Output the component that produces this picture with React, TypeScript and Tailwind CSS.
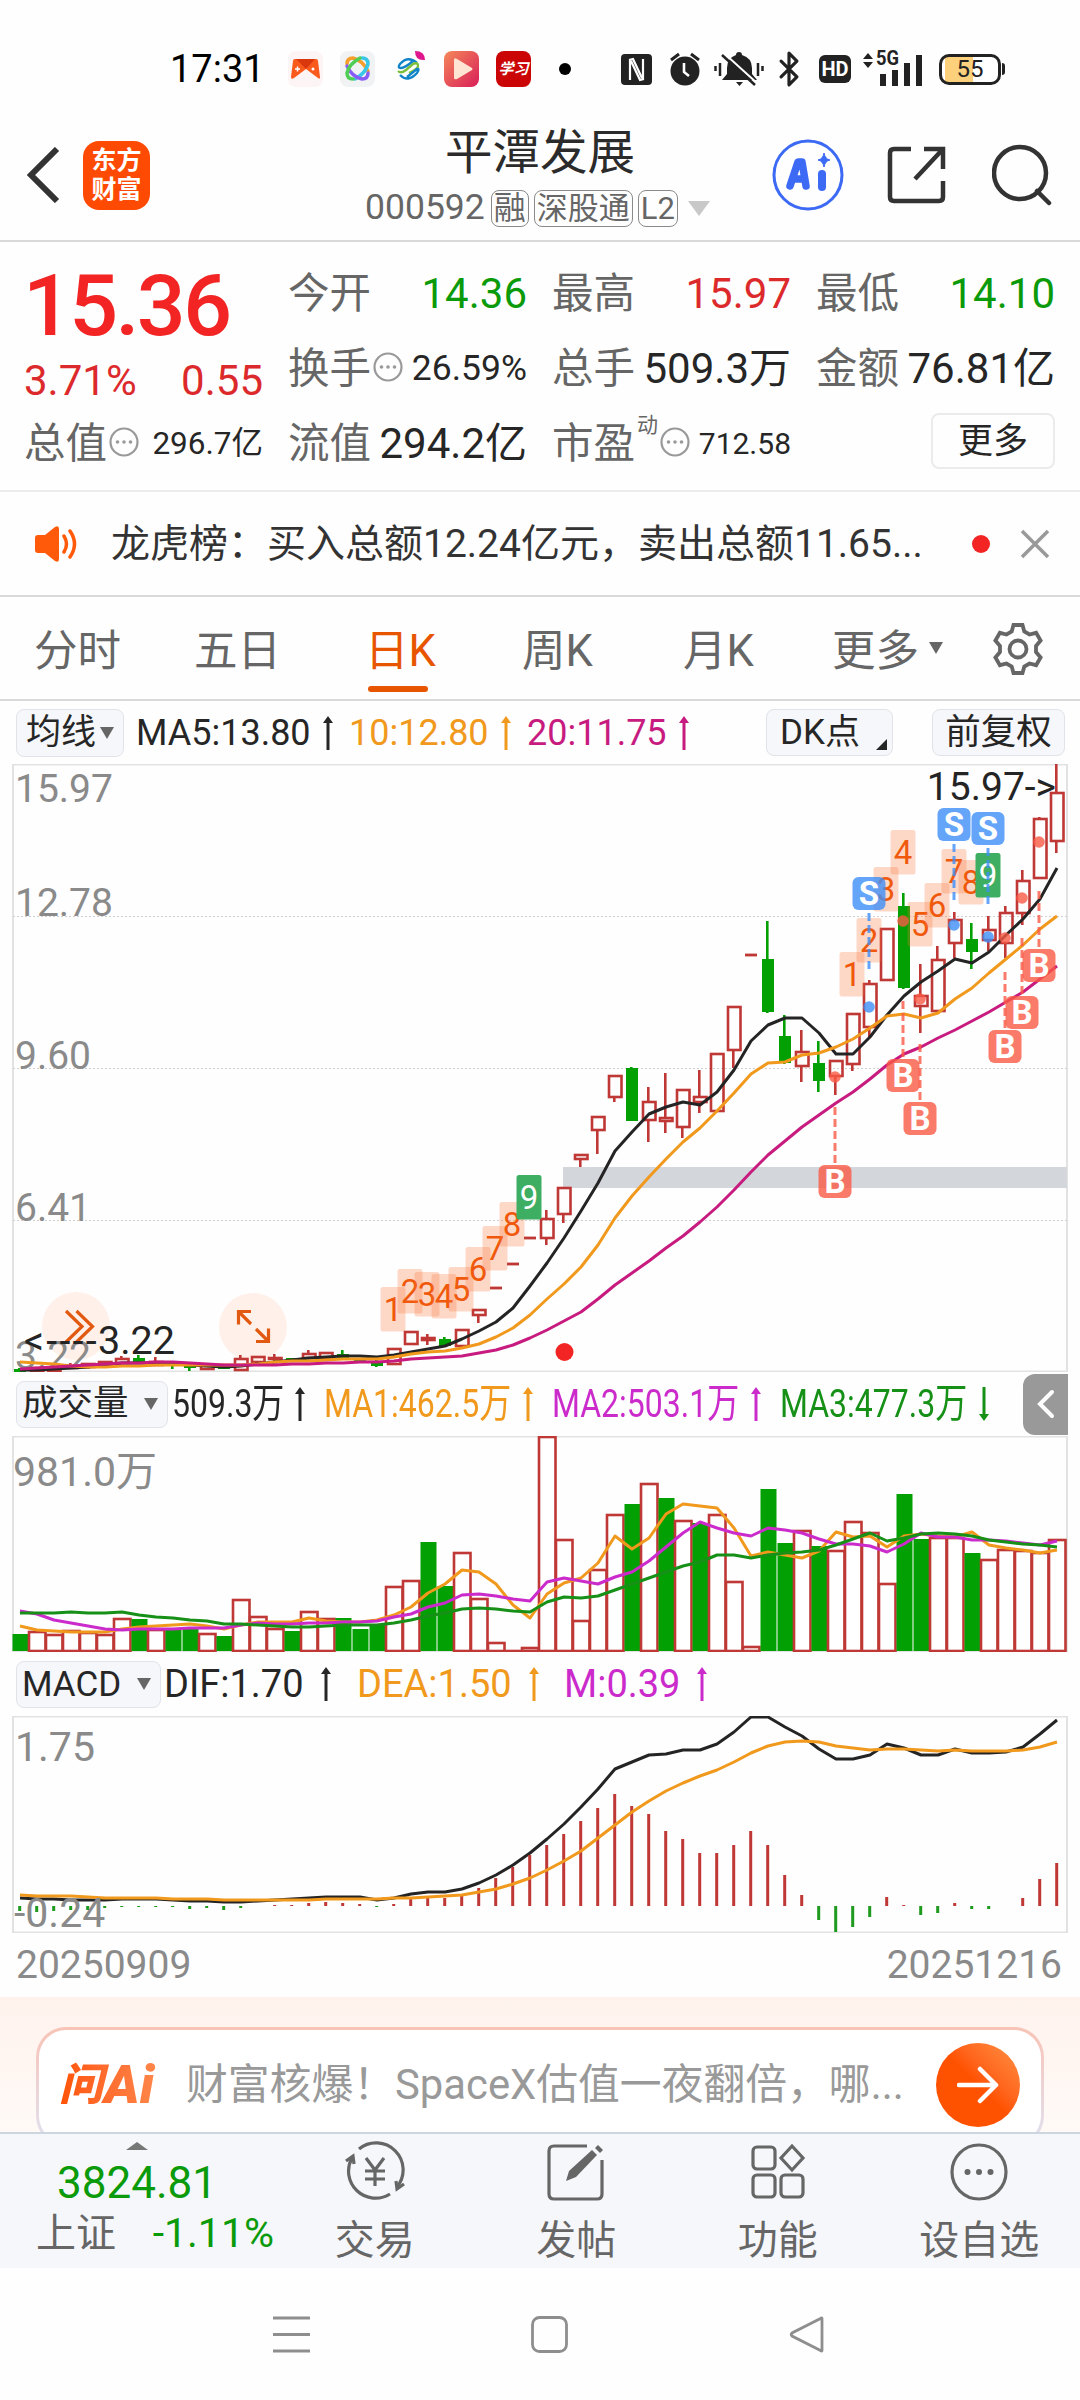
import React from 'react';
import { Bluetooth } from 'lucide-react';

const RED = '#bf3836';
const GREEN = '#02a002';
const INK = '#242424';
const ORANGE = '#f0991c';
const MAGENTA = '#c71b7f';
const PURPLE = '#cb2bcb';

// x of the n-th trading day, shared by all three charts
const px = (i: number) => 20 + i * 17;

type Candle = [string, number, number, number?, number?];

// [colour, body top, body bottom, high, low]
const candles: Candle[] = [
  ['g', 1369, 1372, 1368, 1373], ['r', 1368, 1372], ['r', 1369, 1371], ['r', 1366, 1368, 1363, 1369],
  ['r', 1364, 1367], ['r', 1362, 1366], ['r', 1359, 1363, 1356, 1363], ['g', 1358, 1362, 1355, 1362],
  ['r', 1362, 1365, 1357, 1366], ['g', 1364, 1366, 1363, 1369], ['g', 1365, 1368, 1364, 1371], ['r', 1365, 1369],
  ['g', 1366, 1369], ['r', 1359, 1370, 1355, 1370], ['r', 1357, 1362], ['r', 1358, 1359, 1354, 1361],
  ['g', 1358, 1361], ['r', 1354, 1358, 1350, 1359], ['r', 1353, 1358], ['g', 1354, 1358, 1350, 1358],
  ['g', 1358, 1361], ['g', 1361, 1366, 1360, 1367], ['r', 1349, 1364], ['r', 1332, 1344],
  ['r', 1338, 1340, 1334, 1345], ['g', 1339, 1346, 1337, 1347], ['r', 1330, 1346], ['r', 1310, 1315, 1309, 1323],
  ['d', 1288, 1288], ['d', 1264, 1264], ['d', 1238, 1238], ['r', 1219, 1238, 1210, 1245],
  ['r', 1188, 1214, 1188, 1223], ['r', 1155, 1159, 1155, 1167], ['r', 1117, 1130, 1117, 1154], ['r', 1076, 1097, 1076, 1102],
  ['g', 1068, 1121, 1067, 1121], ['r', 1102, 1120, 1087, 1142], ['r', 1118, 1121, 1073, 1133], ['r', 1090, 1127, 1090, 1138],
  ['r', 1097, 1102, 1070, 1113], ['r', 1054, 1111], ['r', 1007, 1050, 1007, 1068], ['d', 955, 955],
  ['g', 959, 1012, 921, 1013], ['g', 1036, 1063, 1015, 1064], ['r', 1052, 1066, 1030, 1082], ['g', 1063, 1081, 1041, 1092],
  ['r', 1061, 1076, 1061, 1095], ['r', 1014, 1064, 1014, 1071], ['r', 984, 1027, 980, 1037], ['r', 929, 980],
  ['g', 906, 988, 893, 989], ['r', 996, 1006, 964, 1033], ['r', 960, 1011, 946, 1011], ['r', 920, 943, 912, 958],
  ['g', 939, 952, 923, 969], ['r', 930, 940, 916, 951], ['r', 913, 943, 906, 958], ['r', 881, 913, 870, 925],
  ['r', 819, 878, 817, 878], ['r', 793, 841, 764, 853],
];

const ma5 = [
  1370, 1370, 1369, 1368, 1367, 1365, 1363, 1363, 1363, 1364, 1365, 1366, 1367, 1366, 1364, 1362, 1360, 1358, 1357, 1356, 1356,
  1357, 1355, 1352, 1349, 1346, 1339, 1331, 1322, 1308, 1286, 1263, 1238, 1211, 1183, 1151, 1132, 1114, 1107, 1102, 1105,
  1092, 1070, 1041, 1025, 1018, 1018, 1033, 1054, 1054, 1037, 1015, 996, 982, 971, 959, 963, 952, 935, 919, 899, 868,
];
const ma10 = [
  1362, 1363, 1364, 1366, 1367, 1367, 1366, 1366, 1365, 1365, 1365, 1365, 1365, 1365, 1364, 1362, 1361, 1361, 1360, 1359, 1359,
  1359, 1357, 1354, 1352, 1351, 1348, 1344, 1337, 1328, 1315, 1299, 1284, 1267, 1245, 1218, 1196, 1177, 1159, 1142, 1128,
  1111, 1093, 1074, 1063, 1062, 1055, 1053, 1047, 1039, 1028, 1016, 1014, 1018, 1013, 999, 988, 973, 959, 945, 929, 916,
];
const ma20 = [
  1369, 1368, 1367, 1366, 1365, 1364, 1363, 1363, 1362, 1362, 1363, 1364, 1365, 1365, 1365, 1365, 1364, 1364, 1363, 1363, 1362,
  1362, 1361, 1359, 1358, 1357, 1356, 1353, 1350, 1345, 1338, 1330, 1321, 1312, 1299, 1285, 1273, 1261, 1248, 1236, 1222,
  1207, 1190, 1172, 1155, 1141, 1127, 1115, 1103, 1092, 1079, 1065, 1054, 1047, 1038, 1030, 1021, 1012, 1002, 992, 979, 966,
];

// [day, label, top]
const counts: [number, string, number][] = [
  [22, '1', 1287], [23, '2', 1269], [24, '3', 1272], [25, '4', 1274], [26, '5', 1267], [27, '6', 1247], [28, '7', 1226],
  [29, '8', 1202], [30, '9', 1175], [49, '1', 952], [50, '2', 918], [51, '3', 867], [52, '4', 830], [53, '5', 902],
  [54, '6', 883], [55, '7', 849], [56, '8', 860], [57, '9', 853],
];

// [day, kind, badge top, dot y]
const signals: [number, 'B' | 'S', number, number][] = [
  [50, 'S', 877, 1007], [55, 'S', 808, 925], [57, 'S', 812, 937],
  [48, 'B', 1165, 1077], [52, 'B', 1059, 921], [53, 'B', 1102, 999], [58, 'B', 1030, 938], [59, 'B', 996, 898], [60, 'B', 949, 842],
];

const volumes = [
  1634, 1631, 1634, 1630, 1632, 1634, 1618, 1619, 1629, 1630, 1629, 1633, 1636, 1599, 1616, 1628, 1631, 1611, 1618, 1618, 1629,
  1624, 1586, 1580, 1542, 1586, 1552, 1598, 1642, 1650, 1647, 1436, 1539, 1620, 1569, 1514, 1504, 1483, 1498, 1520, 1523,
  1514, 1581, 1646, 1489, 1543, 1530, 1546, 1550, 1521, 1532, 1583, 1494, 1539, 1537, 1537, 1553, 1559, 1549, 1550, 1552, 1539,
];
// days that closed below the previous close
const downDays = [0, 7, 9, 10, 12, 16, 19, 20, 21, 24, 25, 36, 38, 40, 44, 45, 47, 52, 53, 56];

const vma1 = [
  1626, 1630, 1631, 1632, 1632, 1632, 1629, 1627, 1626, 1625, 1624, 1626, 1629, 1625, 1622, 1622, 1622, 1618, 1621, 1622, 1622,
  1620, 1615, 1607, 1593, 1584, 1570, 1572, 1584, 1605, 1618, 1594, 1583, 1578, 1563, 1536, 1549, 1538, 1514, 1504, 1506,
  1508, 1528, 1556, 1552, 1555, 1558, 1551, 1532, 1537, 1536, 1547, 1536, 1534, 1536, 1537, 1532, 1545, 1548, 1550, 1553, 1550,
];
const vma2 = [
  1611, 1614, 1620, 1623, 1626, 1629, 1630, 1629, 1629, 1629, 1628, 1628, 1628, 1625, 1623, 1624, 1624, 1623, 1623, 1622, 1622,
  1621, 1617, 1614, 1607, 1603, 1595, 1594, 1596, 1599, 1601, 1582, 1578, 1581, 1584, 1577, 1572, 1561, 1547, 1533, 1522,
  1528, 1533, 1536, 1528, 1530, 1533, 1539, 1544, 1544, 1546, 1552, 1544, 1533, 1537, 1537, 1540, 1540, 1541, 1543, 1545, 1541,
];
const vma3 = [
  1613, 1613, 1613, 1612, 1613, 1613, 1612, 1615, 1617, 1618, 1620, 1621, 1624, 1624, 1625, 1626, 1627, 1627, 1626, 1625, 1625,
  1625, 1623, 1620, 1616, 1613, 1609, 1608, 1609, 1611, 1612, 1602, 1597, 1598, 1596, 1590, 1584, 1578, 1572, 1566, 1562,
  1555, 1555, 1558, 1555, 1553, 1552, 1550, 1545, 1539, 1533, 1541, 1538, 1534, 1533, 1534, 1536, 1540, 1542, 1544, 1545, 1547,
];

// histogram heights in pixels, positive goes up
const hist = [
  -5, -6, -5, -4, -4, -2, -1, -1, -1, -1, -3, -2, -4, -2, 0, 1, 1, 3, 4, 3, 2,
  -1, 2, 7, 9, 8, 11, 18, 28, 39, 51, 61, 72, 85, 98, 112, 100, 92, 75, 67, 53,
  53, 61, 75, 61, 31, 11, -14, -26, -21, -11, 9, 1, -9, -7, 3, -3, -3, 0, 8, 27, 43,
];
const dif = [
  1898, 1899, 1899, 1900, 1900, 1900, 1899, 1899, 1899, 1900, 1901, 1901, 1902, 1902, 1901, 1900, 1899, 1898, 1897, 1897, 1897,
  1900, 1898, 1894, 1892, 1892, 1889, 1883, 1875, 1865, 1853, 1839, 1824, 1807, 1789, 1769, 1762, 1755, 1754, 1750, 1750,
  1744, 1732, 1717, 1717, 1727, 1736, 1749, 1759, 1759, 1755, 1744, 1748, 1755, 1755, 1749, 1753, 1753, 1752, 1747, 1734, 1720,
];
const dea = [
  1895, 1896, 1896, 1896, 1897, 1898, 1898, 1898, 1898, 1899, 1899, 1899, 1900, 1900, 1900, 1900, 1900, 1900, 1899, 1899, 1899,
  1899, 1898, 1898, 1897, 1896, 1895, 1892, 1889, 1884, 1878, 1870, 1861, 1851, 1838, 1825, 1812, 1801, 1791, 1783, 1776,
  1770, 1762, 1753, 1746, 1742, 1741, 1742, 1746, 1748, 1750, 1749, 1749, 1750, 1751, 1750, 1751, 1751, 1751, 1750, 1747, 1742,
];

function Line({ ys, color }: { ys: number[]; color: string }) {
  return (
    <polyline
      points={ys.map((y, i) => `${px(i)},${y}`).join(' ')}
      fill="none"
      stroke={color}
      strokeWidth="3"
      strokeLinejoin="round"
    />
  );
}

function Frame({ top, bottom }: { top: number; bottom: number }) {
  return <rect x="13" y={top + 0.5} width="1054" height={bottom - top - 1} fill="none" stroke="#e2e2e2" strokeWidth="2" />;
}

function PriceChart() {
  return (
    <svg width="1080" height="608" viewBox="0 764 1080 608" className="block shrink-0">
      <Frame top={764} bottom={1372} />
      {[916.5, 1068.5, 1220.5].map((y) => (
        <line key={y} x1="13" x2="1067" y1={y} y2={y} stroke="#cfcfcf" strokeDasharray="2 2" />
      ))}
      <rect x="563" y="1167" width="504" height="21" fill="#d3d7dc" />
      <circle cx="76" cy="1326" r="34" fill="#fff0e9" />
      <circle cx="253" cy="1327" r="34" fill="#fff0e9" />
      <g fill="none" stroke="#e25a12" strokeWidth="3.2">
        <path d="M66 1311l16 15.500l-16 15.500M76.500 1311l16 15.500l-16 15.500" />
        <path d="M251 1311.500h-12.500v13M239 1312l12 12M256 1341.500h12.500v-13M268 1341l-12-12" />
      </g>
      <g fontSize="39" fill="#8a8a8a">
        <text x="15" y="802">15.97</text>
        <text x="15" y="916">12.78</text>
        <text x="15" y="1069">9.60</text>
        <text x="15" y="1221">6.41</text>
        <text x="15" y="1369">3.22</text>
      </g>
      {candles.map(([kind, top, bottom, high, low], i) => {
        const x = px(i);
        if (kind === 'd') return <line key={i} x1={x - 6} x2={x + 6} y1={top} y2={top} stroke={RED} strokeWidth="2.800" />;
        const color = kind === 'g' ? GREEN : RED;
        return (
          <g key={i} stroke={color} strokeWidth="2.600">
            {high !== undefined && <line x1={x - 0.7} x2={x - 0.7} y1={high} y2={top} />}
            {low !== undefined && <line x1={x - 0.7} x2={x - 0.7} y1={bottom} y2={low} />}
            {kind === 'g' ? (
              <rect x={x - 6} y={top} width="12" height={bottom - top} fill={color} stroke="none" />
            ) : (
              <rect x={x - 6} y={top} width="12.500" height={Math.max(bottom - top, 1)} fill="none" />
            )}
          </g>
        );
      })}
      <Line ys={ma5} color={INK} />
      <Line ys={ma10} color={ORANGE} />
      <Line ys={ma20} color={MAGENTA} />
      {counts.map(([day, label, top]) => (
        <g key={`${day}${label}`}>
          <rect
            x={px(day) - 13.5}
            y={top}
            width="25"
            height="44.500"
            rx="2.500"
            fill={label === '9' ? '#3dae62' : '#fa7333'}
            fillOpacity={label === '9' ? 1 : 0.27}
          />
          <text x={px(day) - 1} y={top + 34} fontSize="33" textAnchor="middle" fill={label === '9' ? '#fff' : '#f0590c'}>
            {label}
          </text>
        </g>
      ))}
      {signals.map(([day, kind, top, dot]) => {
        const x = px(day) - 1;
        const color = kind === 'B' ? '#fa5a46' : '#3f8ef7';
        const y = kind === 'B' ? top - 58 : top + 36;
        return (
          <g key={`${kind}${day}`}>
            <line x1={x} x2={x} y1={y} y2={y + 56} stroke={color} strokeOpacity="0.8" strokeWidth="3" strokeDasharray="8 4" />
            <circle cx={x} cy={dot} r="5.800" fill={color} fillOpacity="0.8" />
            <rect x={x - 16.5} y={top} width="33" height="33" rx="6" fill={color} fillOpacity="0.8" />
            <text x={x} y={top + 28} fontSize="33" fontWeight="700" textAnchor="middle" fill="#fff">
              {kind}
            </text>
          </g>
        );
      })}
      <circle cx="564.500" cy="1352" r="9" fill="#f22424" />
      <g fontSize="39.500" fill={INK}>
        <text x="24" y="1354" letterSpacing="2.200">{'<----'}</text>
        <text x="98" y="1354">3.22</text>
        <text x="1056" y="800" fontSize="39" textAnchor="end">{'15.97->'}</text>
      </g>
    </svg>
  );
}

function VolumeChart() {
  return (
    <svg width="1080" height="216" viewBox="0 1436 1080 216" className="block shrink-0">
      <Frame top={1436} bottom={1652} />
      {volumes.map((top, i) => {
        const x = px(i);
        return downDays.includes(i) ? (
          <rect key={i} x={x - 7.5} y={top} width="16" height={1651 - top} fill={GREEN} />
        ) : (
          <rect key={i} x={x - 8} y={top + 1} width="16.500" height={Math.max(1650 - top, 1)} fill="#fff" stroke={RED} strokeWidth="2.600" />
        );
      })}
      <Line ys={vma1} color={ORANGE} />
      <Line ys={vma2} color={PURPLE} />
      <Line ys={vma3} color="#169016" />
      <text x="13" y="1486" fontSize="41" fill="#8a8a8a">981.0万</text>
    </svg>
  );
}

function MacdChart() {
  return (
    <svg width="1080" height="217" viewBox="0 1716 1080 217" className="block shrink-0">
      <Frame top={1716} bottom={1933} />
      <Line ys={dif} color={INK} />
      {hist.map((h, i) => (
        <rect
          key={i}
          x={px(i) - 1.8}
          y={h > 0 ? 1906 - h : 1906}
          width="3"
          height={Math.abs(h)}
          fill={h > 0 ? RED : '#1e9a1e'}
        />
      ))}
      <Line ys={dea} color={ORANGE} />
      <g fontSize="41" fill="#8a8a8a">
        <text x="15" y="1761">1.75</text>
        <text x="14" y="1927">-0.24</text>
      </g>
    </svg>
  );
}

function Trend({ down = false }: { down?: boolean }) {
  return (
    <svg width="10" height="34" viewBox="0 0 10 34" className={down ? 'rotate-180 shrink-0' : 'shrink-0'}>
      <path d="M5 5V34" stroke="currentColor" strokeWidth="3" />
      <path d="M5 0L10 7H0z" fill="currentColor" />
    </svg>
  );
}

function Caret() {
  return <span className="border-x-[7.5px] border-t-[12px] border-x-transparent border-t-[#666]" />;
}

function InfoDots() {
  return (
    <svg width="30" height="30" viewBox="0 0 30 30" className="shrink-0">
      <circle cx="15" cy="15" r="13.500" fill="none" stroke="#999" strokeWidth="2.200" />
      <circle cx="8.500" cy="15" r="1.800" fill="#999" />
      <circle cx="15" cy="15" r="1.800" fill="#999" />
      <circle cx="21.500" cy="15" r="1.800" fill="#999" />
    </svg>
  );
}

function StatusBar() {
  return (
    <div className="flex h-[110px] shrink-0 items-center pl-[170px] pt-7">
      <span className="w-[118px] text-[38px] leading-none text-black">17:31</span>
      <div className="flex w-[243px] items-center justify-between">
        <svg width="35" height="36" viewBox="0 0 35 36">
          <rect width="35" height="36" rx="8" fill="#fdf4f5" />
          <path d="M5 10q0-2 2-2h21q2 0 2 2l2 16q0 3-2 1l-12-9-12 9q-3 2-3-1z" fill="#fb5a1d" />
          <path d="M8 8h19l-9 10z" fill="#d9380f" />
          <path d="M7 18h5M9.500 15.500v5" stroke="#fff" strokeWidth="1.500" />
          <circle cx="25" cy="18" r="1.500" fill="#fff" />
        </svg>
        <svg width="35" height="36" viewBox="0 0 35 36">
          <rect width="35" height="36" rx="8" fill="#f1f2f4" />
          <g fill="none" strokeWidth="3.500" strokeLinecap="round">
            <path d="M7 13Q7 7 13 7q9 2 15 13" stroke="#f59e2c" />
            <path d="M22 7q6 0 6 6-2 9-13 15" stroke="#38c6e8" />
            <path d="M28 22q0 6-6 6Q12 26 7 15" stroke="#8a5cf6" />
            <path d="M13 28q-6 0-6-6Q9 13 20 7" stroke="#4fce55" />
          </g>
        </svg>
        <svg width="35" height="36" viewBox="0 0 35 36">
          <g fill="none" strokeWidth="2.400">
            <path d="M25 12Q16 4 8 13q-3 4 1 4t12-7" stroke="#1184c9" />
            <path d="M6 20q3 3 8-1l7-6q4-2 5 1t-9 8" stroke="#7bbf3a" />
            <path d="M8 24q8 8 17-2q3-5 0-4l-10 8" stroke="#1184c9" />
          </g>
          <path d="M23 0q10 0 10 9q-10 1-10-9z" fill="#e0168c" />
        </svg>
        <svg width="35" height="36" viewBox="0 0 35 36">
          <defs>
            <linearGradient id="play" x1="0" y1="0" x2="1" y2="1">
              <stop offset="0" stopColor="#f5885a" />
              <stop offset="1" stopColor="#d81e58" />
            </linearGradient>
          </defs>
          <rect width="35" height="36" rx="8" fill="url(#play)" />
          <path d="M10 9q0-3 3-1l15 9q1 1 0 2l-15 9q-3 1-3-1z" fill="#ffe4d3" />
        </svg>
        <span className="flex h-9 w-[35px] items-center justify-center rounded-lg bg-[#cb0505] text-[15px] font-bold italic leading-none text-white">
          学习
        </span>
      </div>
      <span className="ml-[28px] h-3 w-3 rounded-full bg-black" />
      <div className="ml-[50px] flex items-center text-[#222]">
        <svg width="31" height="31" viewBox="0 0 31 31">
          <rect width="31" height="31" rx="4" fill="#222" />
          <path d="M9 26V6M8 6l4-1 9 19M22 5v20M23 25l-4 1-9-19" fill="none" stroke="#fff" strokeWidth="2.200" />
        </svg>
        <svg width="34" height="36" viewBox="0 0 34 36" className="ml-[16px]">
          <circle cx="17" cy="20" r="14.500" fill="#222" />
          <path d="M3 9l8-6M31 9l-8-6" stroke="#222" strokeWidth="3" />
          <path d="M16 12v9l5 4" fill="none" stroke="#fff" strokeWidth="2.600" />
        </svg>
        <svg width="50" height="36" viewBox="0 0 50 36" className="ml-[12px]">
          <path d="M25 1q3 0 3 3q10 3 10 13v6l5 6H8l5-6v-6q0-10 9-13q0-3 3-3z" fill="#222" />
          <path d="M22 31h7l-3.500 4z" fill="#222" />
          <path d="M12 4l32 29" stroke="#fff" strokeWidth="2" />
          <path d="M8 4l33 30" stroke="#222" strokeWidth="2.500" />
          <path d="M6 12v13M1.500 15v5M44 12v13M48.500 15v5" stroke="#222" strokeWidth="2.500" />
        </svg>
        <Bluetooth className="ml-[5px] h-[38px] w-[40px]" strokeWidth={2} />
        <span className="ml-[10px] flex h-[28px] w-[32px] items-center justify-center rounded-md bg-[#222] text-[20px] font-bold leading-none text-white">
          HD
        </span>
        <svg width="60" height="40" viewBox="0 -4 60 40" className="mb-1 ml-[12px]">
          <path d="M5 2l5 6H0zM5 17l5-6H0z" fill="#222" />
          <text x="13" y="14" fontSize="21" fontWeight="700" textLength="23" lengthAdjust="spacingAndGlyphs" fill="#222">5G</text>
          <path d="M20 23v12M32 19v16M44 12v23M56 4v31" stroke="#222" strokeWidth="6" />
        </svg>
        <span className="ml-[16px] flex h-[31px] w-[62px] items-center justify-center rounded-[10px] border-[3px] border-[#222] bg-[linear-gradient(90deg,#fff_3px,#fdd07c_3px,#fdd07c_31px,#fff_31px)] text-[24px] leading-none">
          55
        </span>
        <span className="ml-px h-3 w-[3px] rounded-r bg-[#222]" />
      </div>
    </div>
  );
}

function Header() {
  return (
    <header className="flex h-[132px] shrink-0 items-center border-b-2 border-[#d9d9d9] pl-[26px] pr-[28px]">
      <svg width="34" height="56" viewBox="0 0 34 56">
        <path d="M31 2L5 28l26 26" fill="none" stroke="#333" strokeWidth="6" />
      </svg>
      <div className="ml-[23px] flex h-[69px] w-[67px] flex-col items-center justify-center rounded-2xl bg-[#ff4a03] text-[25px] font-bold leading-[29px] text-white">
        <span>东方</span>
        <span>财富</span>
      </div>
      <div className="ml-[162px] flex w-[451px] flex-col items-center">
        <h1 className="pl-[5px] text-[47.500px] leading-[60px] text-[#2b2b2b]">平潭发展</h1>
        <div className="mt-[6px] flex h-[38px] items-center text-[#666]">
          <span className="text-[35.500px] leading-none">000592</span>
          <span className="ml-[6px] rounded-lg border-[1.5px] border-[#8a8a8a] px-[2px] text-[32px] leading-[35px]">融</span>
          <span className="ml-[5px] rounded-lg border-[1.5px] border-[#8a8a8a] px-[2px] text-[31px] leading-[35px]">深股通</span>
          <span className="ml-[5px] rounded-lg border-[1.5px] border-[#8a8a8a] px-[2px] text-[31px] leading-[35px]">L2</span>
          <span className="ml-[10px] border-x-[11px] border-t-[15px] border-x-transparent border-t-[#c8c8c8]" />
        </div>
      </div>
      <svg width="72" height="72" viewBox="0 0 72 72" className="ml-[9px]">
        <circle cx="36" cy="36" r="34" fill="none" stroke="#3c6af5" strokeWidth="3" />
        <g stroke="#3c6af5" fill="none" strokeLinecap="round" strokeLinejoin="round">
          <path d="M18 47L26 23h4l4 24M21 40h11" strokeWidth="7.500" />
          <path d="M50 35v13" strokeWidth="8" />
        </g>
        <path d="M52 14q1 6 6 7q-5 1-6 7q-1-6-6-7q5-1 6-7z" fill="#3c6af5" stroke="#3c6af5" />
      </svg>
      <svg width="60" height="60" viewBox="0 0 60 60" className="ml-[43px]">
        <g fill="none" stroke="#333" strokeWidth="4.500">
          <path d="M24 4H7q-4 0-4 4v44q0 4 4 4h45q4 0 4-4V36" />
          <path d="M37 4h19v20M56 4L28 34" />
        </g>
      </svg>
      <svg width="60" height="62" viewBox="0 0 60 62" className="ml-auto">
        <circle cx="28" cy="29" r="26" fill="none" stroke="#333" strokeWidth="4.500" />
        <path d="M45 47l12 12" stroke="#333" strokeWidth="4.500" strokeLinecap="round" />
      </svg>
    </header>
  );
}

interface QuoteProps {
  label: string;
  value: string;
  valueClass?: string;
  info?: boolean;
  sup?: string;
}

function Quote({ label, value, valueClass = 'text-[42px] text-[#262626]', info, sup }: QuoteProps) {
  return (
    <div className="flex h-[75px] items-center whitespace-nowrap leading-none">
      <span className="text-[41.500px] text-[#666]">{label}</span>
      {sup && <span className="mb-9 ml-[2px] text-[21px] text-[#666]">{sup}</span>}
      {info && <span className="mb-1 ml-[2px]"><InfoDots /></span>}
      <span className={`ml-auto ${valueClass}`}>{value}</span>
    </div>
  );
}

function QuotePanel() {
  return (
    <section className="grid h-[250px] shrink-0 grid-cols-[239px_239px_239px_239px] gap-x-[25px] border-b-2 border-[#ececec] pl-[24px] pt-[14px]">
      <div>
        <div className="-ml-px pt-[5px] text-[86px] font-medium leading-[90px] tracking-[-2.600px] text-[#f22424]">15.36</div>
        <div className="flex h-[55px] items-center justify-between pt-[4px] text-[42px] leading-none text-[#dc2a2c]">
          <span>3.71%</span>
          <span>0.55</span>
        </div>
        <Quote label="总值" value="296.7亿" valueClass="text-[31.5px] text-[#262626]" info />
      </div>
      <div>
        <Quote label="今开" value="14.36" valueClass="text-[42px] text-[#0a9a0a]" />
        <Quote label="换手" value="26.59%" valueClass="text-[35.5px] text-[#262626]" info />
        <Quote label="流值" value="294.2亿" />
      </div>
      <div>
        <Quote label="最高" value="15.97" valueClass="text-[42px] text-[#dc2a2c]" />
        <Quote label="总手" value="509.3万" />
        <Quote label="市盈" value="712.58" valueClass="text-[30px] text-[#262626]" sup="动" info />
      </div>
      <div>
        <Quote label="最低" value="14.10" valueClass="text-[42px] text-[#0a9a0a]" />
        <Quote label="金额" value="76.81亿" />
        <button className="ml-auto mt-[7px] block h-[56px] w-[124px] rounded-lg border-2 border-[#ebebeb] text-[35px] leading-none text-[#262626]">
          更多
        </button>
      </div>
    </section>
  );
}

function Notice() {
  return (
    <section className="flex h-[105px] shrink-0 items-center border-b-2 border-[#d9d9d9] pl-[34px] pr-[30px]">
      <svg width="46" height="38" viewBox="0 0 46 38">
        <path d="M1 13q0-3 3-3h7l10-8q4-2 4 2v30q0 4-4 2l-10-8H4q-3 0-3-3z" fill="#ff5a0a" />
        <path d="M30 11q5 8 0 16M36 6q9 13 0 26" fill="none" stroke="#ff5a0a" strokeWidth="3.500" strokeLinecap="round" />
      </svg>
      <p className="ml-[31px] whitespace-nowrap pt-px text-[39px] leading-none text-[#333]">龙虎榜：买入总额12.24亿元，卖出总额11.65...</p>
      <span className="ml-auto h-[18px] w-[18px] rounded-full bg-[#f22424]" />
      <svg width="30" height="30" viewBox="0 0 30 30" className="ml-[30px]">
        <path d="M2 2l26 26M28 2L2 28" stroke="#999" strokeWidth="3.500" />
      </svg>
    </section>
  );
}

const tabs = [
  { label: '分时', width: 'w-[160px]' },
  { label: '五日', width: 'w-[171px]' },
  { label: '日K', width: 'w-[157px]', active: true },
  { label: '周K', width: 'w-[161px]' },
  { label: '月K', width: 'w-[149px]' },
];

function Tabs() {
  return (
    <nav className="flex h-[104px] shrink-0 border-b-2 border-[#d9d9d9] pl-[34px] text-[43.500px] leading-none text-[#666]">
      {tabs.map((tab) => (
        <div key={tab.label} className={`flex flex-col items-start ${tab.width}`}>
          <span className={`pt-[33px] ${tab.active ? 'text-[#e85500]' : ''}`}>{tab.label}</span>
          {tab.active && <span className="ml-[3px] mt-[12px] h-[6px] w-[60px] rounded bg-[#e85500]" />}
        </div>
      ))}
      <span className="pt-[33px]">更多</span>
      <span className="ml-[10px] mt-[45px] h-0 w-0 border-x-[7px] border-t-[12px] border-x-transparent border-t-[#666]" />
      <svg width="54" height="54" viewBox="0 0 54 54" className="ml-[48px] mt-[25px]">
        <path
          d="M22.500 3h9l1.800 6.500 5.200 3 6.600-1.700 4.500 7.800L45 24v6l4.600 5.400-4.500 7.800-6.600-1.700-5.200 3L31.500 51h-9l-1.800-6.500-5.200-3-6.600 1.700-4.500-7.800L9 30v-6l-4.600-5.400 4.500-7.800 6.600 1.700 5.200-3z"
          fill="none"
          stroke="#666"
          strokeWidth="3.800"
        />
        <circle cx="27" cy="27" r="8.500" fill="none" stroke="#666" strokeWidth="3.800" />
      </svg>
    </nav>
  );
}

const chip = 'flex shrink-0 items-center rounded-lg border-[1.5px] border-[#e0e3e8] bg-[#f6f7fa] leading-none text-[#262626]';

function MaRow() {
  return (
    <div className="flex h-[63px] shrink-0 items-center whitespace-nowrap pl-4 text-[36px] leading-none">
      <div className={`h-[48px] w-[108px] justify-center gap-[4px] text-[35px] ${chip}`}>
        均线
        <Caret />
      </div>
      <div className="ml-[12px] flex w-[213px] items-center gap-[12px] text-[#262626]">MA5:13.80<Trend /></div>
      <div className="flex w-[178px] items-center gap-[12px] text-[#f0991c]">10:12.80<Trend /></div>
      <div className="flex w-[239px] items-center gap-[12px] text-[#c71b7f]">20:11.75<Trend /></div>
      <div className={`h-[47px] w-[127px] justify-between pl-[13px] pr-[5px] text-[35px] ${chip}`}>
        DK点
        <span className="mt-[24px] border-b-[11px] border-l-[11px] border-b-[#262626] border-l-transparent" />
      </div>
      <div className={`ml-[39px] h-[47px] w-[133px] justify-center text-[35.500px] ${chip}`}>前复权</div>
    </div>
  );
}

function Narrow({ text, width }: { text: string; width: string }) {
  return (
    <span className={width}>
      <span className="inline-block origin-left scale-x-[.81]">{text}</span>
    </span>
  );
}

function VolumeRow() {
  return (
    <div className="flex h-[64px] shrink-0 items-center whitespace-nowrap pl-4 text-[39.500px] leading-none">
      <div className={`h-[47px] w-[152px] justify-between pl-[5px] pr-[9px] text-[35.5px] ${chip}`}>
        成交量
        <Caret />
      </div>
      <div className="ml-[4px] flex w-[152px] items-center text-[#262626]"><Narrow text="509.3万" width="w-[123px]" /><Trend /></div>
      <div className="flex w-[228px] items-center text-[#f0991c]"><Narrow text="MA1:462.5万" width="w-[199px]" /><Trend /></div>
      <div className="flex w-[228px] items-center text-[#cb2bcb]"><Narrow text="MA2:503.1万" width="w-[199px]" /><Trend /></div>
      <div className="flex w-[243px] items-center text-[#169016]"><Narrow text="MA3:477.3万" width="w-[199px]" /><Trend down /></div>
      <div className="flex h-[61px] w-[45px] items-center justify-center rounded-l-xl bg-[#999]">
        <svg width="18" height="30" viewBox="0 0 18 30">
          <path d="M15 3L3 15l12 12" fill="none" stroke="#fff" strokeWidth="4" strokeLinecap="round" />
        </svg>
      </div>
    </div>
  );
}

function MacdRow() {
  return (
    <div className="flex h-[64px] shrink-0 items-center whitespace-nowrap pl-4 text-[38px] leading-none">
      <div className={`h-[47px] w-[145px] justify-between pl-[5px] pr-[9px] text-[35px] ${chip}`}>
        MACD
        <Caret />
      </div>
      <div className="ml-[3px] flex w-[193px] items-center gap-[17px] text-[#262626]">DIF:1.70<Trend /></div>
      <div className="flex w-[207px] items-center gap-[17px] text-[#f0991c]">DEA:1.50<Trend /></div>
      <div className="flex items-center gap-[17px] text-[#cb2bcb]">M:0.39<Trend /></div>
    </div>
  );
}

function AskBar() {
  return (
    <section className="h-[135px] shrink-0 overflow-hidden bg-gradient-to-b from-[#fff2ed] to-[#fffaf6] px-[36px] pt-[30px]">
      <div className="h-[119px] rounded-[30px] bg-gradient-to-b from-[#f8c3b6] to-[#dfe2f2] p-[3px]">
        <div className="flex h-full items-center rounded-[27px] bg-white pb-[4px] pl-[20px] pr-[21px]">
          <div className="flex w-[106px] items-center whitespace-nowrap bg-gradient-to-r from-[#ff5200] to-[#ff8a4d] bg-clip-text text-[54px] font-black italic leading-none text-transparent">
            <span className="inline-block w-[45px] text-[44px]">问</span>
            <span>Ai</span>
          </div>
          <p className="ml-[21px] whitespace-nowrap text-[41.800px] leading-none text-[#999]">财富核爆！SpaceX估值一夜翻倍，哪...</p>
          <div className="ml-auto flex h-[84px] w-[84px] shrink-0 items-center justify-center rounded-full bg-gradient-to-tr from-[#ff5200] from-50% to-[#ff9142]">
            <svg width="42" height="38" viewBox="0 0 42 38">
              <path d="M2 19h37M23 3l16 16-16 16" fill="none" stroke="#fff" strokeWidth="4.500" strokeLinecap="round" strokeLinejoin="round" />
            </svg>
          </div>
        </div>
      </div>
    </section>
  );
}

const actions = [
  {
    label: '交易',
    icon: (
      <>
        <path d="M15 8a27 27 0 0 1 38 38M46 53a27 27 0 0 1-38-36" />
        <path d="M2 20l7-5 1 8M60 43l-7 5-1-8" />
        <path d="M22 17l9 12 9-12M21 30h20M21 38h20M31 29v16" />
      </>
    ),
  },
  {
    label: '发帖',
    icon: (
      <>
        <path d="M42 5H9q-5 0-5 5v43q0 5 5 5h43q5 0 5-5V19" />
        <path d="M21 40l3-10L47 9l5 5-21 22z" fill="#666" stroke="none" />
        <path d="M50 7l3-3 5 5-3 3z" fill="#666" stroke="none" />
      </>
    ),
  },
  {
    label: '功能',
    icon: (
      <>
        <rect x="6" y="6" width="22" height="22" rx="4" />
        <path d="M45 5l11 12-11 12-11-12z" />
        <rect x="6" y="34" width="22" height="22" rx="4" />
        <rect x="34" y="34" width="22" height="22" rx="4" />
      </>
    ),
  },
  {
    label: '设自选',
    icon: (
      <>
        <circle cx="31" cy="31" r="27" />
        <g fill="#666" stroke="none">
          <circle cx="19.500" cy="31" r="3" />
          <circle cx="31" cy="31" r="3" />
          <circle cx="42.500" cy="31" r="3" />
        </g>
      </>
    ),
  },
];

function BottomBar() {
  return (
    <footer className="flex h-[136px] shrink-0 border-t-2 border-[#cdd6de] bg-[#f6f7fa]">
      <div className="flex w-[274px] flex-col items-center whitespace-nowrap leading-none">
        <span className="mt-[8px] border-x-[11px] border-b-[8px] border-x-transparent border-b-[#777]" />
        <span className="mt-[11px] text-[44px] text-[#0a9a0a]">3824.81</span>
        <div className="mt-[8px] flex w-[238px] items-center justify-between self-end text-[40px]">
          <span className="text-[#666]">上证</span>
          <span className="text-[41px] text-[#0a9a0a]">-1.11%</span>
        </div>
      </div>
      {actions.map((action) => (
        <div key={action.label} className="flex flex-1 flex-col items-center pt-[7px] text-[40px] leading-none text-[#666]">
          <svg width="62" height="62" viewBox="0 0 62 62" fill="none" stroke="#666" strokeWidth="3.200">
            {action.icon}
          </svg>
          <span className="mt-[18px]">{action.label}</span>
        </div>
      ))}
    </footer>
  );
}

function SystemNav() {
  return (
    <div className="flex h-[132px] shrink-0 items-center justify-center gap-[221px] pl-[18px]">
      {[
        <path key="menu" d="M0 2h37M0 18.500h37M0 35h37" />,
        <rect key="home" x="1.500" y="1.500" width="34" height="34" rx="7" />,
        <path key="back" d="M33 2.500v32q0 1-1.500 0L3 20q-1.500-1.500 0-3L31.500 2.500q1.500-1 1.500 0z" />,
      ].map((icon) => (
        <svg key={icon.key} width="37" height="37" viewBox="0 0 37 37" fill="none" stroke="#8e8e8e" strokeWidth="2.800">
          {icon}
        </svg>
      ))}
    </div>
  );
}

export default function App() {
  return (
    <div className="flex h-[2400px] w-[1080px] flex-col overflow-hidden bg-[#fefefe] font-[Roboto,'Noto_Sans_CJK_SC',sans-serif] text-[#262626]">
      <StatusBar />
      <Header />
      <QuotePanel />
      <Notice />
      <Tabs />
      <MaRow />
      <PriceChart />
      <VolumeRow />
      <VolumeChart />
      <MacdRow />
      <MacdChart />
      <div className="flex h-[64px] shrink-0 items-center justify-between pl-4 pr-[18px] pt-px text-[39px] leading-none text-[#8a8a8a]">
        <span>20250909</span>
        <span>20251216</span>
      </div>
      <AskBar />
      <BottomBar />
      <SystemNav />
    </div>
  );
}
